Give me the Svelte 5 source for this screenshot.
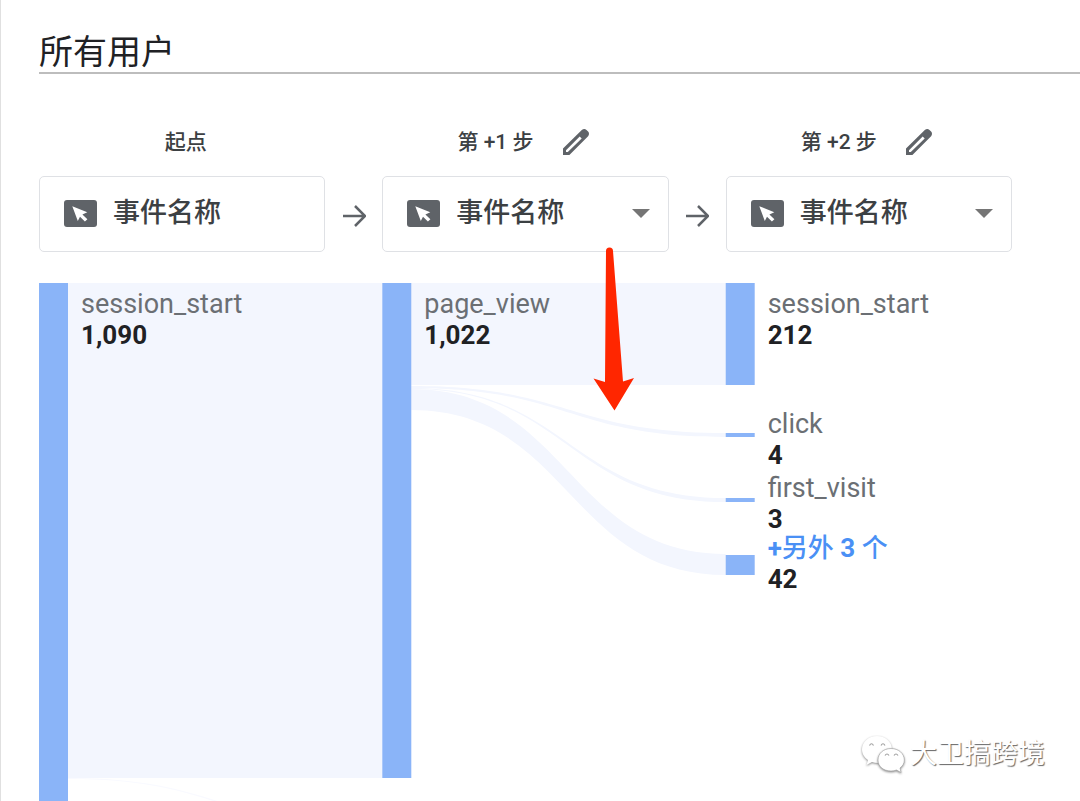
<script>
  const steps = [
    { id: 'step-0', title: '起点', editable: false },
    { id: 'step-1', title: '第 +1 步', editable: true },
    { id: 'step-2', title: '第 +2 步', editable: true }
  ];

  // Chart space: 973 units across, one unit per pixel down.
  const W = 973;
  const NODE = 29;
  const columns = [0, 343.3, 686.7];

  const nodes = [
    { col: 0, y: 0, h: 560, label: 'session_start', value: '1,090', at: 6 },
    { col: 1, y: 0, h: 495, label: 'page_view', value: '1,022', at: 6 },
    { col: 2, y: 0, h: 102, label: 'session_start', value: '212', at: 6 },
    { col: 2, y: 150, h: 4, label: 'click', value: '4', at: 126 },
    { col: 2, y: 215, h: 4, label: 'first_visit', value: '3', at: 190 },
    { col: 2, y: 272, h: 20, more: 3, value: '42', at: 250 }
  ];

  const links = [
    { from: 0, a: [0, 495], b: [0, 495] },
    { from: 0, a: [495, 496], b: [546, 548], faint: true },
    { from: 1, a: [0, 102], b: [0, 102] },
    { from: 1, a: [103, 105], b: [150, 154] },
    { from: 1, a: [105, 106], b: [215, 219] },
    { from: 1, a: [106, 127], b: [271, 292] }
  ];

  function ribbon({ from, a, b }) {
    const x0 = columns[from] + NODE;
    const x1 = columns[from + 1];
    const m = (x0 + x1) / 2;
    return `M${x0} ${a[0]}C${m} ${a[0]} ${m} ${b[0]} ${x1} ${b[0]}V${b[1]}C${m} ${b[1]} ${m} ${a[1]} ${x0} ${a[1]}Z`;
  }
</script>

{#snippet eventIcon()}
  <svg class="event-icon" viewBox="0 0 33 27" aria-hidden="true">
    <rect width="33" height="27" rx="3" fill="#5f6368" />
    <path d="M8.3 6.2 23.3 12.3 18.4 14.4 23.4 19.3 20.9 21.6 16 16.7 13.8 21Z" fill="#fff" />
  </svg>
{/snippet}

<main class="page">
  <h1>所有用户</h1>

  <div class="steps">
    {#each steps as step, i}
      {#if i > 0}
        <svg class="next" viewBox="0 0 24 24" aria-hidden="true">
          <path d="M1 12H22.5M13 2 23 12 13 22" fill="none" stroke="#5f6368" stroke-width="2.5" />
        </svg>
      {/if}
      <section class="step">
        <div class="step-head" class:plain={!step.editable}>
          {#if step.editable}
            <label for={step.id}>{step.title}</label>
            <button type="button" aria-label="修改">
              <svg viewBox="0 0 26 26" aria-hidden="true">
                <path
                  fill="#5f6368"
                  fill-rule="evenodd"
                  d="M0 19.6 18.8.9Q21.3-.9 23.5.9L25.1 2.5Q26.9 4.700 25.1 7.200L6.400 26H0ZM3 21.200V23H4.800L18.700 9.400 16.700 7.400Z"
                />
              </svg>
            </button>
          {:else}
            <span>{step.title}</span>
          {/if}
        </div>
        <div class="card">
          {@render eventIcon()}
          {#if step.editable}
            <select id={step.id}>
              <option>事件名称</option>
            </select>
            <svg class="caret" viewBox="0 0 18 9" aria-hidden="true"><path d="M0 0H18L9 9Z" fill="#757575" /></svg>
          {:else}
            <span>事件名称</span>
          {/if}
        </div>
      </section>
    {/each}
  </div>

  <div class="chart">
    <svg class="flow" viewBox="0 0 {W} 560" preserveAspectRatio="none" aria-hidden="true">
      {#each links as link}
        <path d={ribbon(link)} fill={link.faint ? '#f9faff' : '#f3f6fe'} />
      {/each}
      {#each nodes as n}
        <rect x={columns[n.col]} y={n.y} width={NODE} height={n.h} fill="#8ab4f8" />
      {/each}
    </svg>
    {#each nodes as n}
      <div class="node" style="left: {(columns[n.col] / W) * 100}%; top: {n.at}px">
        {#if n.more}
          <a href="#more"><b>+</b>另外 <b>{n.more}</b> 个</a>
        {:else}
          <span>{n.label}</span>
        {/if}
        <strong>{n.value}</strong>
      </div>
    {/each}
    <svg class="pointer" viewBox="1 0 42 164" aria-hidden="true">
      <path d="M13 4Q13 .5 16.5.5T20 4L30 134.5 41 131 21.5 163.5.5 131.5 12 135Z" fill="#ff2600" />
    </svg>
  </div>

  <div class="credit">
    <svg viewBox="0 0 44 38" aria-hidden="true">
      <g fill="#fff">
        <path class="bubble" d="M16 1C7.5 1 1 7 1 14.5 1 19 3.4 22.7 7 25L5.5 30 11 27Q15 28.5 20 27.8C27 27 31 21 31 14.5 31 7 24.5 1 16 1Z" />
        <path class="bubble" d="M30 13.5C22.5 13.5 17 18.5 17 25S22.5 36 30 36Q33 36 35.5 35L40 37.5 39 33C41.8 31 43.3 28.3 43.3 25 43.3 18.5 37.5 13.5 30 13.5Z" stroke="#a0a0a0" stroke-width=".6" />
      </g>
      <path d="M8.5 10.5Q10.5 7 12.5 10.500M20 10.500Q22 7 24 10.500M24 20.500Q26 17.500 28 20.500M33 20.500Q35 17.500 37 20.500" fill="none" stroke="#a0a0a0" stroke-width="1.2" />
    </svg>
    <span>大卫搞跨境</span>
  </div>
</main>

<style>
  :global(body) {
    margin: 0;
    background: #fff;
  }
  .page {
    box-sizing: border-box;
    position: relative;
    display: flex;
    flex-direction: column;
    height: 100vh;
    overflow: hidden;
    padding: 32px 0 0 38px;
    border-left: 1px solid #e0e0e0;
    font-family: Roboto, 'Noto Sans CJK SC', sans-serif;
    color: #3c4043;
  }
  h1 {
    margin: 0;
    border-bottom: 2px solid #bdbdbd;
    font-size: 34px;
    line-height: 40px;
    font-weight: 400;
    color: #202124;
  }
  .steps {
    display: grid;
    grid-template-columns: 1fr 57px 1fr 57px 1fr;
    align-items: end;
    margin: 50px 68px 0 0;
  }
  .step-head {
    display: flex;
    align-items: center;
    justify-content: center;
    gap: 24px;
    height: 36px;
    margin-bottom: 16px;
    font-size: 21px;
    line-height: 24px;
    font-weight: 500;
  }
  .plain {
    padding-left: 7px;
  }
  button {
    width: 36px;
    height: 36px;
    padding: 5px;
    border: 0;
    background: none;
    cursor: pointer;
  }
  button svg {
    display: block;
    width: 26px;
    height: 26px;
  }
  .card {
    box-sizing: border-box;
    display: flex;
    align-items: center;
    height: 76px;
    padding: 0 18px 2px 24px;
    border: 1px solid #dfe1e5;
    border-radius: 5px;
    font-size: 27px;
    line-height: 32px;
    font-weight: 500;
  }
  .event-icon {
    flex: none;
    width: 33px;
    height: 27px;
    margin-right: 16px;
  }
  select {
    flex: 1;
    min-width: 0;
    height: 60px;
    margin-right: -18px;
    padding: 0;
    border: 0;
    appearance: none;
    background: none;
    font: inherit;
    color: inherit;
  }
  .caret {
    flex: none;
    width: 18px;
    height: 9px;
    pointer-events: none;
  }
  .next {
    justify-self: center;
    width: 24px;
    height: 24px;
    margin-bottom: 24px;
  }
  .chart {
    position: relative;
    flex: 1;
    min-height: 0;
    margin: 31px 68px 0 0;
  }
  .flow {
    display: block;
    width: 100%;
    height: 560px;
  }
  .node {
    position: absolute;
    display: flex;
    flex-direction: column;
    padding-left: 42px;
    font-size: 26px;
    line-height: 31px;
    white-space: nowrap;
    color: #6b6f74;
  }
  .node span {
    font-size: 27px;
  }
  .node strong {
    font-weight: 700;
    color: #202124;
  }
  .node a {
    font-weight: 500;
    color: #4a90f5;
    text-decoration: none;
  }
  .node b {
    font-weight: 700;
  }
  .pointer {
    position: absolute;
    left: 57%;
    top: -36px;
    width: 42px;
    height: 164px;
    overflow: visible;
  }
  .credit {
    position: absolute;
    right: 35px;
    bottom: 28px;
    display: flex;
    align-items: center;
    gap: 5px;
    font-size: 27px;
    line-height: 38px;
    color: #fff;
    text-shadow: 1px 1px 1px #666;
  }
  .credit svg {
    width: 44px;
    height: 38px;
    overflow: visible;
  }
  .bubble {
    filter: drop-shadow(0 1px 1px #8a8a8a);
  }
</style>
